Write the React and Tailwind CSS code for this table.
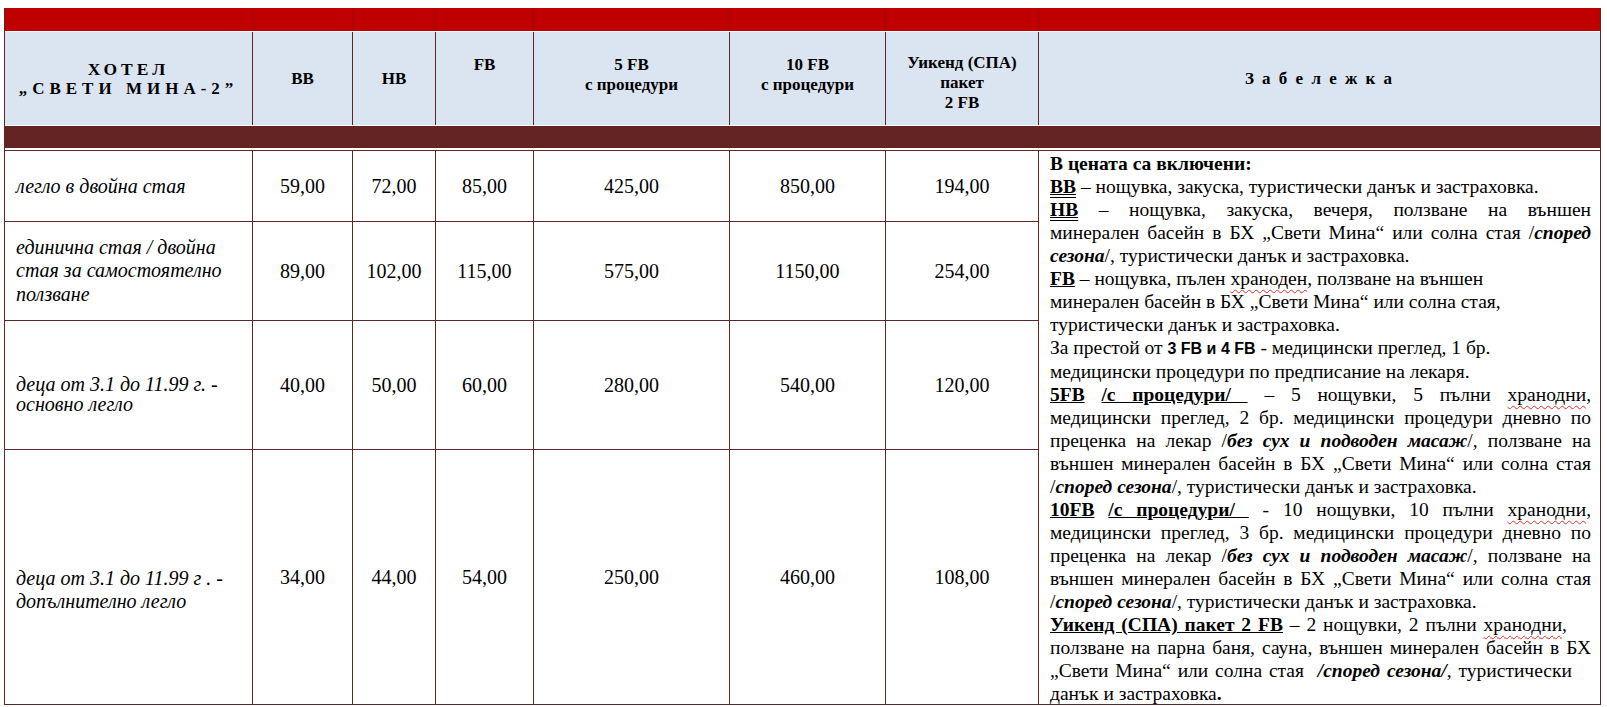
const line = "border-[#5b2727]";

const rows = [
  { label: ["легло в двойна стая"], vals: ["59,00", "72,00", "85,00", "425,00", "850,00", "194,00"], pad: "", lead: "leading-[23px]" },
  { label: ["единична стая / двойна", "стая за самостоятелно", "ползване"], vals: ["89,00", "102,00", "115,00", "575,00", "1150,00", "254,00"], pad: "", lead: "leading-[23.5px]" },
  { label: ["деца от 3.1 до 11.99 г. -", "основно легло"], vals: ["40,00", "50,00", "60,00", "280,00", "540,00", "120,00"], pad: "pt-[18px]", lead: "leading-[20px]" },
  { label: ["деца от 3.1 до 11.99 г . -", "допълнително легло"], vals: ["34,00", "44,00", "54,00", "250,00", "460,00", "108,00"], pad: "pt-[25px]", lead: "leading-[23px]" },
];

const Spell = ({ children }) => (
  <span className="underline decoration-wavy decoration-[#e03030] decoration-1 underline-offset-[4px]">{children}</span>
);

const BI = ({ children }) => <b className="italic">{children}</b>;

const J = ({ children }) => (
  <div className="text-justify [text-align-last:justify] whitespace-nowrap">{children}</div>
);

const L = ({ children, className = "" }) => <div className={`whitespace-nowrap ${className}`}>{children}</div>;

const Notes = () => (
  <div className="text-[19.5px] leading-[23px] pl-[11px] pr-[9px] pt-[1px]">
    <L><b>В цената са включени:</b></L>
    <L><b className="underline decoration-double">BB</b> – нощувка, закуска, туристически данък и застраховка.</L>
    <J><b className="underline decoration-double">HB</b> – нощувка, закуска, вечеря, ползване на външен</J>
    <J>минерален басейн в БХ „Свети Мина“ или солна стая /<BI>според</BI></J>
    <L><BI>сезона</BI>/, туристически данък и застраховка.</L>
    <L><b className="underline">FB</b> – нощувка, пълен <Spell>храноден</Spell>, ползване на външен</L>
    <L>минерален басейн в БХ „Свети Мина“ или солна стая,</L>
    <L>туристически данък и застраховка.</L>
    <L>
      За престой от <b className="font-['Liberation_Sans',sans-serif] text-[16px]">3 FB и 4 FB</b> - медицински преглед, 1 бр.
    </L>
    <L>медицински процедури по предписание на лекаря.</L>
    <J>
      <b className="underline">5FB</b> <b className="underline">/с процедури/&nbsp;</b> – 5 нощувки, 5 пълни <Spell>хранодни</Spell>,
    </J>
    <J>медицински преглед, 2 бр. медицински процедури дневно по</J>
    <J>преценка на лекар /<BI>без сух и подводен масаж</BI>/, ползване на</J>
    <J>външен минерален басейн в БХ „Свети Мина“ или солна стая</J>
    <L>/<BI>според сезона</BI>/, туристически данък и застраховка.</L>
    <J>
      <b className="underline">10FB</b> <b className="underline">/с процедури/&nbsp;</b> - 10 нощувки, 10 пълни <Spell>хранодни</Spell>,
    </J>
    <J>медицински преглед, 3 бр. медицински процедури дневно по</J>
    <J>преценка на лекар /<BI>без сух и подводен масаж</BI>/, ползване на</J>
    <J>външен минерален басейн в БХ „Свети Мина“ или солна стая</J>
    <L>/<BI>според сезона</BI>/, туристически данък и застраховка.</L>
    <L className="[word-spacing:2px]">
      <b className="underline">Уикенд (СПА) пакет 2 FB</b> – 2 нощувки, 2 пълни <Spell>хранодни</Spell>,
    </L>
    <J>ползване на парна баня, сауна, външен минерален басейн в БХ</J>
    <L className="[word-spacing:2px]">„Свети Мина“ или солна стая &nbsp;<BI>/според сезона/</BI>, туристически</L>
    <L>данък и застраховка<b>.</b></L>
  </div>
);

export default function App() {
  return (
    <div className="min-h-screen bg-white pt-[8px] pl-[4px] font-['Liberation_Serif','Times_New_Roman',serif] text-black">
      <div className={`w-[1597px] border-l border-r ${line}`}>
        {/* red top band */}
        <div className="grid grid-cols-[248px_100px_83px_98px_196px_156px_153px_1fr] h-[23px] bg-[#c00000]">
          {[0, 1, 2, 3, 4, 5, 6].map((i) => (
            <div key={i} className="border-r border-[#9a0c0c]" />
          ))}
          <div />
        </div>
        <div className="h-px bg-white" />

        {/* header */}
        <div className="grid grid-cols-[248px_100px_83px_98px_196px_156px_153px_1fr] h-[93px] bg-[#dbe5f1] font-bold text-[17px] leading-[20px] text-center">
          <div className={`flex flex-col justify-center items-center border-r ${line} tracking-[5px]`}>
            <div className="tracking-[4px] text-[17.5px]">ХОТЕЛ</div>
            <div>„СВЕТИ МИНА-2”</div>
          </div>
          <div className={`flex items-center justify-center border-r ${line}`}>BB</div>
          <div className={`flex items-center justify-center border-r ${line}`}>HB</div>
          <div className={`pt-[23px] border-r ${line}`}>FB</div>
          <div className={`pt-[23px] border-r ${line}`}>
            <div>5 FB</div>
            <div>с процедури</div>
          </div>
          <div className={`pt-[23px] border-r ${line}`}>
            <div>10 FB</div>
            <div>с процедури</div>
          </div>
          <div className={`pt-[21px] border-r ${line}`}>
            <div>Уикенд (СПА)</div>
            <div>пакет</div>
            <div>2 FB</div>
          </div>
          <div className="flex items-center justify-center tracking-[2px]">З а б е л е ж к а</div>
        </div>
        <div className="h-px bg-white" />

        {/* dark band */}
        <div className="h-[22px] bg-[#632423]" />
        <div className="h-[2px] bg-white" />

        {/* body */}
        <div className={`grid grid-cols-[248px_100px_83px_98px_196px_156px_153px_1fr] grid-rows-[71px_99px_129px_255px] border-t ${line} text-[20px]`}>
          <div className={`col-start-8 row-start-1 row-span-4 border-b ${line}`}>
            <Notes />
          </div>
          {rows.map((r, ri) => (
            <div key={ri} className="contents">
              <div className={`flex flex-col justify-center pl-[11px] italic border-r border-b ${line} ${r.pad} ${r.lead}`}>
                {r.label.map((t, i) => (
                  <div key={i} className="whitespace-nowrap">{t}</div>
                ))}
              </div>
              {r.vals.map((v, vi) => (
                <div key={vi} className={`flex items-center justify-center border-r border-b ${line}`}>
                  {v}
                </div>
              ))}
            </div>
          ))}
        </div>
      </div>
    </div>
  );
}
